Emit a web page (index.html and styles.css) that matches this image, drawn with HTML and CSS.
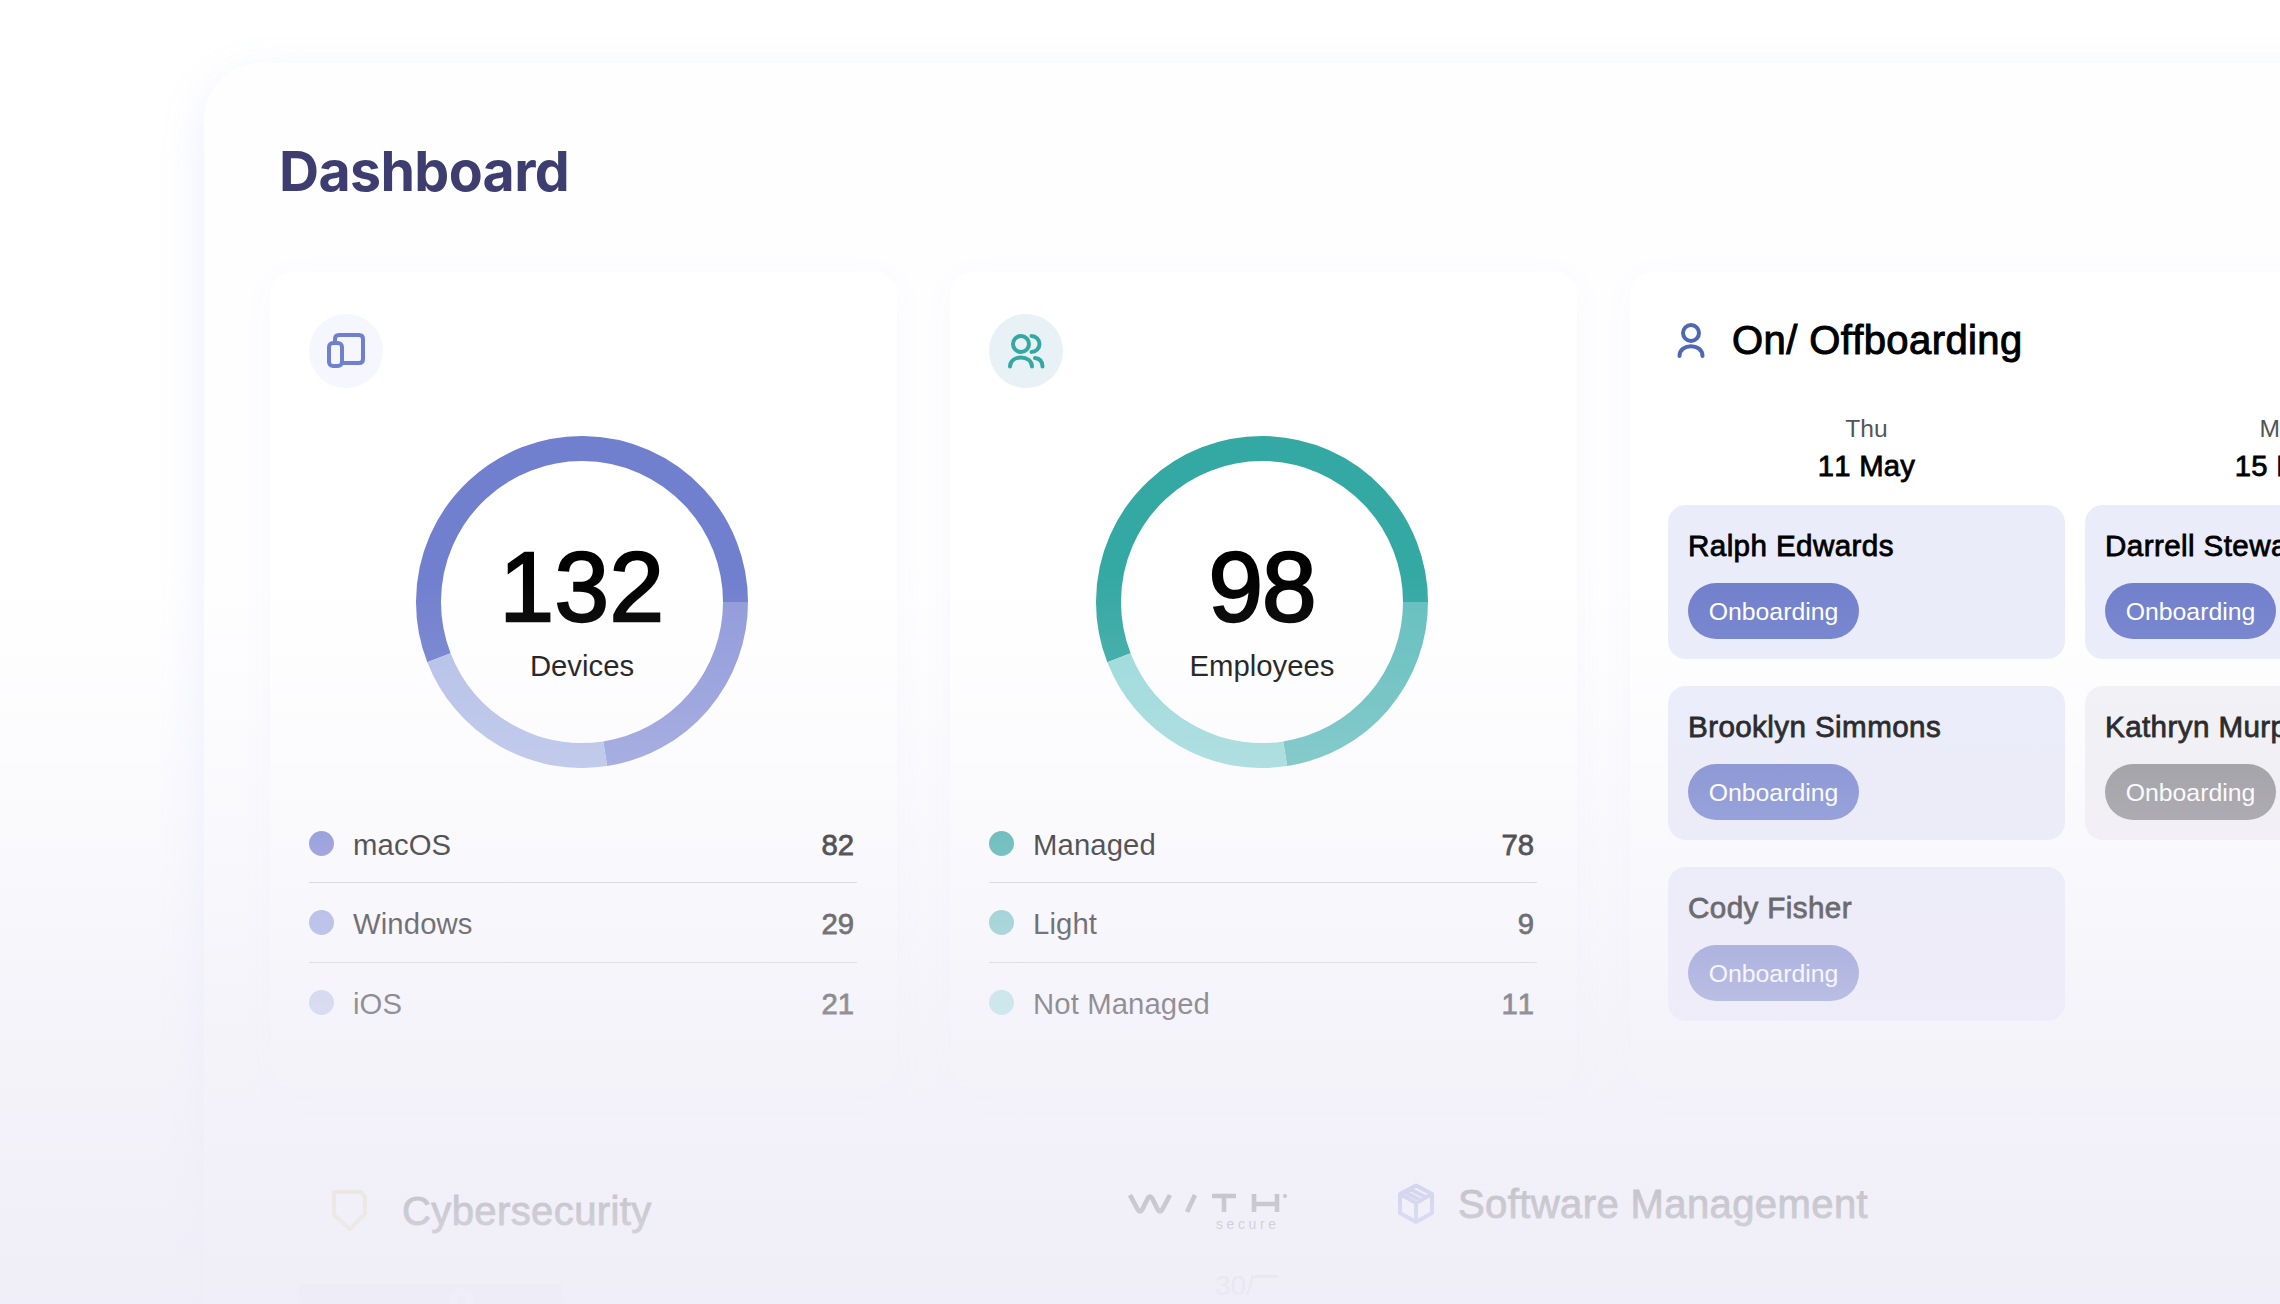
FILE: index.html
```html
<!DOCTYPE html>
<html lang="en">
<head>
<meta charset="utf-8">
<title>Dashboard</title>
<link rel="stylesheet" href="styles.css">
</head>
<body>
<main class="panel">
  <h1 class="title">Dashboard</h1>
  <div class="cards">
    <section class="card stat">
      <span class="badge blue"><svg width="40" height="40" viewBox="0 0 40 40"><path d="M9 12V8q0-4 4-4h20q4 0 4 4v20q0 4-4 4H17"/><rect x="3" y="12" width="13" height="23" rx="4"/></svg></span>
      <div class="donut">
        <svg width="332" height="332" viewBox="0 0 332 332">
          <circle class="arc b1" cx="166" cy="166" r="153.500" pathLength="360" stroke-dasharray="201.300 360" transform="rotate(158.700 166 166)"/>
          <circle class="arc b2" cx="166" cy="166" r="153.500" pathLength="360" stroke-dasharray="81.300 360"/>
          <circle class="arc b3" cx="166" cy="166" r="153.500" pathLength="360" stroke-dasharray="77.400 360" transform="rotate(81.300 166 166)"/>
        </svg>
        <div class="total"><strong>132</strong><span>Devices</span></div>
      </div>
      <ul class="legend">
        <li><i class="dot d1"></i><span>macOS</span><b>82</b></li>
        <li><i class="dot d2"></i><span>Windows</span><b>29</b></li>
        <li><i class="dot d3"></i><span>iOS</span><b>21</b></li>
      </ul>
    </section>
    <section class="card stat">
      <span class="badge teal"><svg width="40" height="40" viewBox="0 0 40 40"><circle cx="15" cy="13" r="8"/><path d="M25.500 5a8 8 0 0 1 0 16M4 35.500c0-12 22-12 22 0M29 27c4.500.5 7.500 3.500 7.500 8.500"/></svg></span>
      <div class="donut">
        <svg width="332" height="332" viewBox="0 0 332 332">
          <circle class="arc t1" cx="166" cy="166" r="153.500" pathLength="360" stroke-dasharray="201.300 360" transform="rotate(158.700 166 166)"/>
          <circle class="arc t2" cx="166" cy="166" r="153.500" pathLength="360" stroke-dasharray="81.300 360"/>
          <circle class="arc t3" cx="166" cy="166" r="153.500" pathLength="360" stroke-dasharray="77.400 360" transform="rotate(81.300 166 166)"/>
        </svg>
        <div class="total"><strong class="tight">98</strong><span>Employees</span></div>
      </div>
      <ul class="legend">
        <li><i class="dot e1"></i><span>Managed</span><b>78</b></li>
        <li><i class="dot e2"></i><span>Light</span><b>9</b></li>
        <li><i class="dot e3"></i><span>Not Managed</span><b>11</b></li>
      </ul>
    </section>
    <section class="card boarding">
      <h2 class="heading"><svg class="person" width="30" height="36" viewBox="0 0 30 36"><circle cx="15" cy="11" r="8"/><path d="M3.500 34c0-13 23-13 23 0"/></svg>On/ Offboarding</h2>
      <div class="days">
        <div class="day">
          <div class="date"><span>Thu</span><b>11 May</b></div>
          <div class="person-card"><b>Ralph Edwards</b><span class="pill">Onboarding</span></div>
          <div class="person-card"><b>Brooklyn Simmons</b><span class="pill">Onboarding</span></div>
          <div class="person-card"><b>Cody Fisher</b><span class="pill">Onboarding</span></div>
        </div>
        <div class="day">
          <div class="date"><span>Mon</span><b>15 May</b></div>
          <div class="person-card"><b>Darrell Steward</b><span class="pill">Onboarding</span></div>
          <div class="person-card grey"><b>Kathryn Murphy</b><span class="pill">Onboarding</span></div>
        </div>
      </div>
    </section>
  </div>
  <div class="lower">
    <section class="security">
      <h2 class="heading"><svg class="shield" width="40" height="46" viewBox="0 0 40 46"><path d="M5 4h27l4 5v17L21 41 5 27Z"/></svg>Cybersecurity</h2>
      <div class="chart"><svg width="262" height="24" viewBox="0 0 262 24"><path d="M155 24V13q0-8 8-8t8 8V24"/></svg></div>
    </section>
    <section class="vendor">
      <svg width="162" height="26" viewBox="0 0 162 26"><path d="M2 4l8 15q2 3 4 0l6-12q2-3 4 0l6 12q2 3 4 0l8-15M67 4l-8 17M84 5h24M96 5v16M126 3v18M149 3v18M126 13h24"/><circle cx="157" cy="5" r="2"/></svg>
      <span class="secure">secure</span>
      <span class="score">30/<i></i></span>
    </section>
    <h2 class="heading software"><svg class="cube" width="40" height="42" viewBox="0 0 40 42"><path d="M20 2.500l16 8.500v19l-16 9-16-9V11ZM4 11l16 9 16-9M20 20v19M14 6l16 8.500M9 9l16 8.500"/></svg>Software Management</h2>
  </div>
</main>
<div class="fade"></div>
</body>
</html>
```
FILE: styles.css
```css
* { box-sizing: border-box; }
html { overflow: hidden; }
body {
  margin: 0;
  width: 2280px;
  height: 1304px;
  padding: 63px 0 0 204px;
  position: relative;
  overflow: hidden;
  background: #fff;
  font-family: "Liberation Sans", Arial, sans-serif;
  font-size: 29.3px;
  font-kerning: none;
  color: #000;
}
.panel {
  width: 2180px;
  height: 1400px;
  padding: 79px 0 0 66px;
  background: #fefeff;
  border-radius: 56px;
  box-shadow: 0 16px 48px rgba(112, 140, 255, .14);
}
.title {
  margin: 0 0 72px 9px;
  font: 700 55.5px/58px Inter, "Liberation Sans", sans-serif;
  letter-spacing: -.65px;
  color: #3d3e6f;
}
.cards { display: flex; gap: 53px; }
.card {
  flex: none;
  height: 816px;
  background: #fff;
  border-radius: 24px;
  box-shadow: 0 6px 36px rgba(120, 100, 220, .035);
}
.stat { width: 627px; padding: 42px 40px 0 39px; }
.badge {
  display: flex;
  width: 74px;
  height: 74px;
  align-items: center;
  justify-content: center;
  border-radius: 50%;
}
.badge svg, .person, .shield, .cube { fill: none; stroke: currentColor; stroke-width: 4; stroke-linecap: round; stroke-linejoin: round; }
.blue { background: #f5f6fe; color: #6f80d0; }
.teal { background: #e8f1f5; color: #35a8a2; }
.donut {
  display: grid;
  width: 332px;
  height: 332px;
  margin: 48px 0 0 107px;
  place-items: center;
}
.donut > * { grid-area: 1 / 1; }
.arc { fill: none; stroke-width: 25; }
.b1 { stroke: #707fce; }
.b2 { stroke: #919bda; }
.b3 { stroke: #b4c0e8; }
.t1 { stroke: #34a8a3; }
.t2 { stroke: #65bfbe; }
.t3 { stroke: #9bdada; }
.total { display: flex; flex-direction: column; align-items: center; padding-top: 16px; }
.total strong { font-weight: 400; font-size: 98px; line-height: 98px; -webkit-text-stroke: 2.4px #000; letter-spacing: .5px; }
.total strong.tight { letter-spacing: -1px; }
.total span { line-height: 34px; margin-top: 13px; color: #111; }
.legend { margin: 36px 0 0; padding: 0; list-style: none; width: 548px; }
.legend li { display: flex; align-items: center; height: 79.3px; border-bottom: 1.5px solid #cfcfd4; padding-right: 3px; }
.legend li:last-child { border: 0; }
.legend span, .legend b { line-height: 34px; padding-top: 4px; }
.legend span { letter-spacing: .1px; }
.legend b { margin-left: auto; }
b { font-weight: 400; -webkit-text-stroke: .8px currentColor; }
.dot { width: 25px; height: 25px; margin-right: 19px; border-radius: 50%; }
.d1 { background: #737fcf; }
.d2 { background: #909edd; }
.d3 { background: #b7bfe6; }
.e1 { background: #34a8a5; }
.e2 { background: #6ac0bf; }
.e3 { background: #9bdddd; }
.boarding { width: 800px; padding: 45px 0 0 38px; }
.heading {
  display: flex;
  align-items: center;
  margin: 0;
  font-size: 40px;
  line-height: 46px;
  font-weight: 400;
  letter-spacing: .4px;
  white-space: nowrap;
  -webkit-text-stroke: 1px #000;
}
.person { color: #4f68b4; margin: 0 26px 0 8px; }
.days { display: flex; gap: 20px; margin-top: 49px; }
.day { display: flex; flex: none; flex-direction: column; gap: 27px; width: 397px; }
.date { display: flex; flex-direction: column; align-items: center; height: 66px; padding-top: 2px; }
.date span { font-size: 24.6px; line-height: 30px; color: #555; }
.date b { line-height: 38px; margin-top: 3px; letter-spacing: .2px; }
.person-card { height: 154px; padding: 23px 20px; border-radius: 18px; background: #ebecfa; }
.person-card b { display: block; font-size: 29.6px; line-height: 36px; letter-spacing: .4px; white-space: nowrap; }
.pill {
  display: block;
  width: 171px;
  height: 56px;
  margin-top: 19px;
  border-radius: 28px;
  background: #707fcc;
  color: #fff;
  font-size: 24.8px;
  line-height: 58px;
  text-align: center;
}
.day .person-card:nth-child(4) .pill { background: #6b78c7; }
.day .person-card.grey { background: #f2f1f4; }
.day .person-card.grey .pill { background: #8f8e92; }
.lower { display: flex; padding-top: 96px; }
.security { width: 858px; padding: 4px 0 0 59px; }
.shield { color: #d9d27a; margin: 0 33px 0 0; }
.chart { width: 262px; height: 30px; margin: 50px 0 0 -30px; background: #d6d4e0; }
.chart path { fill: none; stroke: #fff; stroke-width: 8; }
.vendor { display: flex; flex: none; width: 164px; padding-top: 7px; flex-direction: column; }
.vendor svg { fill: none; stroke: #000; stroke-width: 4.6; }
.vendor circle { stroke: none; fill: #000; }
.secure { padding-left: 88px; font-size: 14px; line-height: 12px; letter-spacing: 3.6px; margin-top: 1px; }
.score { display: flex; padding-left: 87px; margin-top: 42px; font-size: 28px; line-height: 28px; color: #888; }
.score i { width: 24px; height: 3px; margin-top: 3px; background: #999; }
.software { align-self: flex-start; padding-left: 104px; margin-top: -3px; }
.cube { color: #5964cf; margin-right: 22px; }
.fade {
  position: absolute;
  inset: 0;
  background: linear-gradient(to bottom, rgba(239,237,247,0) 570px, rgba(239,237,247,.1) 665px, rgba(239,237,247,.18) 726px, rgba(239,237,247,.35) 845px, rgba(239,237,247,.46) 915px, rgba(239,237,247,.6) 1003px, rgba(239,237,247,.85) 1210px, rgba(239,237,247,.97) 1304px);
}
```
